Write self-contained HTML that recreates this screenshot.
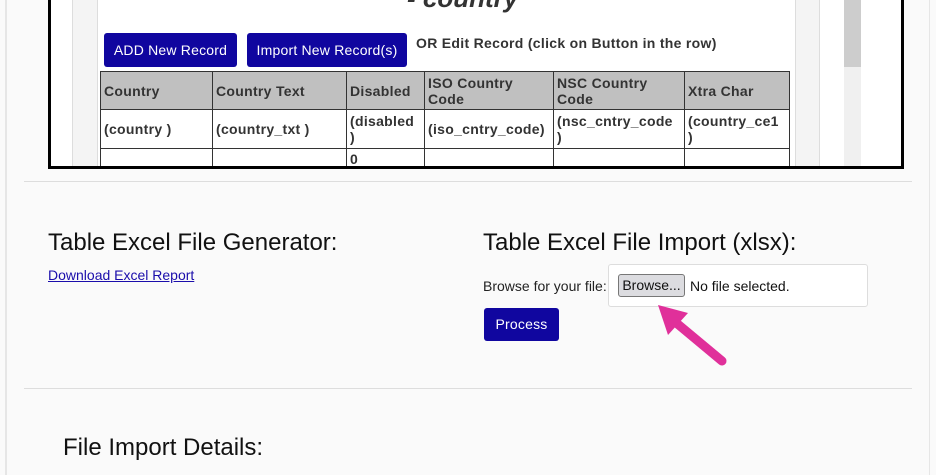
<!DOCTYPE html>
<html><head><style>
body{margin:0;width:936px;height:475px;overflow:hidden;background:#fafafa;position:relative;font-family:"Liberation Sans",Arial,sans-serif}
.a{position:absolute}
.btn{position:absolute;background:#10069f;color:#fff;border-radius:3px;font-size:14px;text-align:center;box-sizing:border-box;letter-spacing:0.2px}
table{border-collapse:collapse;table-layout:fixed;width:689px;font-size:14px;letter-spacing:0.3px;font-weight:bold;color:#333}
td{border:1px solid #333;padding:0 3px;vertical-align:middle;line-height:16px;word-wrap:break-word}
</style></head><body>
<div class="a" style="left:5px;top:0;width:2px;height:475px;background:#e6e6e6"></div>
<div class="a" style="left:929px;top:0;width:1px;height:475px;background:#e6e6e6"></div>
<div class="a" style="left:48px;top:-3px;width:850px;height:166px;border:3px solid #000;background:#fff;overflow:hidden">
 <div class="a" style="left:21px;top:0;width:24px;height:170px;background:#f4f4f4;border-left:1px solid #ddd;border-right:1px solid #ddd"></div>
 <div class="a" style="left:744px;top:0;width:23px;height:170px;background:#f4f4f4;border-left:1px solid #ddd;border-right:1px solid #ddd"></div>
 <div class="a" style="left:793px;top:0;width:17px;height:170px;background:#f0f0f0"></div>
 <div class="a" style="left:793px;top:0;width:17px;height:67px;background:#cdcdcd"></div>
 <div class="a" style="left:356px;top:-17px;font-size:26px;font-weight:bold;font-style:italic;color:#333">- country</div>
</div>
<div class="btn" style="left:104px;top:33px;width:133px;height:34px;line-height:34px">ADD New Record</div>
<div class="btn" style="left:247px;top:33px;width:160px;height:34px;line-height:34px">Import New Record(s)</div>
<div class="a" style="left:416px;top:35px;font-size:14px;font-weight:bold;color:#333;letter-spacing:0.3px">OR Edit Record (click on Button in the row)</div>
<div class="a" style="left:100px;top:71px;overflow:hidden;height:95px">
<table>
<colgroup><col style="width:112px"><col style="width:134px"><col style="width:78px"><col style="width:129px"><col style="width:131px"><col style="width:105px"></colgroup>
<tr style="background:#c0c0c0;height:38px"><td>Country</td><td>Country Text</td><td>Disabled</td><td>ISO Country Code</td><td>NSC Country Code</td><td>Xtra Char</td></tr>
<tr style="background:#fff;height:39px"><td>(country )</td><td>(country_txt )</td><td>(disabled )</td><td>(iso_cntry_code)</td><td>(nsc_cntry_code )</td><td>(country_ce1 )</td></tr>
<tr style="background:#fff;height:20px"><td></td><td></td><td style="vertical-align:top;padding-top:2px">0</td><td></td><td></td><td></td></tr>
</table></div>
<div class="a" style="left:24px;top:181px;width:888px;height:1px;background:#ddd"></div>
<div class="a" style="left:24px;top:388px;width:888px;height:1px;background:#ddd"></div>
<div class="a" style="left:48px;top:229px;font-size:24px;color:#111">Table Excel File Generator:</div>
<div class="a" style="left:48px;top:267px;font-size:14px;color:#1a0dab;text-decoration:underline">Download Excel Report</div>
<div class="a" style="left:483px;top:229px;font-size:24px;color:#111">Table Excel File Import (xlsx):</div>
<div class="a" style="left:483px;top:278px;font-size:14px;color:#222">Browse for your file:</div>
<div class="a" style="left:608px;top:264px;width:258px;height:41px;border:1px solid #ddd;border-radius:3px;background:#fff"></div>
<div class="a" style="left:618px;top:274px;width:65px;height:21px;border:1px solid #777;border-radius:3px;background:#dcdce0;font-size:14px;line-height:21px;text-align:center;color:#111">Browse...</div>
<div class="a" style="left:690px;top:278px;font-size:14px;color:#111">No file selected.</div>
<div class="btn" style="left:484px;top:308px;width:75px;height:33px;line-height:33px">Process</div>
<svg class="a" style="left:640px;top:295px" width="100" height="80"><path d="M82 66 L34 26" stroke="#e0309a" stroke-width="9" stroke-linecap="round"/><path d="M18 10 L48 18 L28 40 Z" fill="#e0309a"/></svg>
<div class="a" style="left:63px;top:434px;font-size:24px;color:#111">File Import Details:</div>
</body></html>
